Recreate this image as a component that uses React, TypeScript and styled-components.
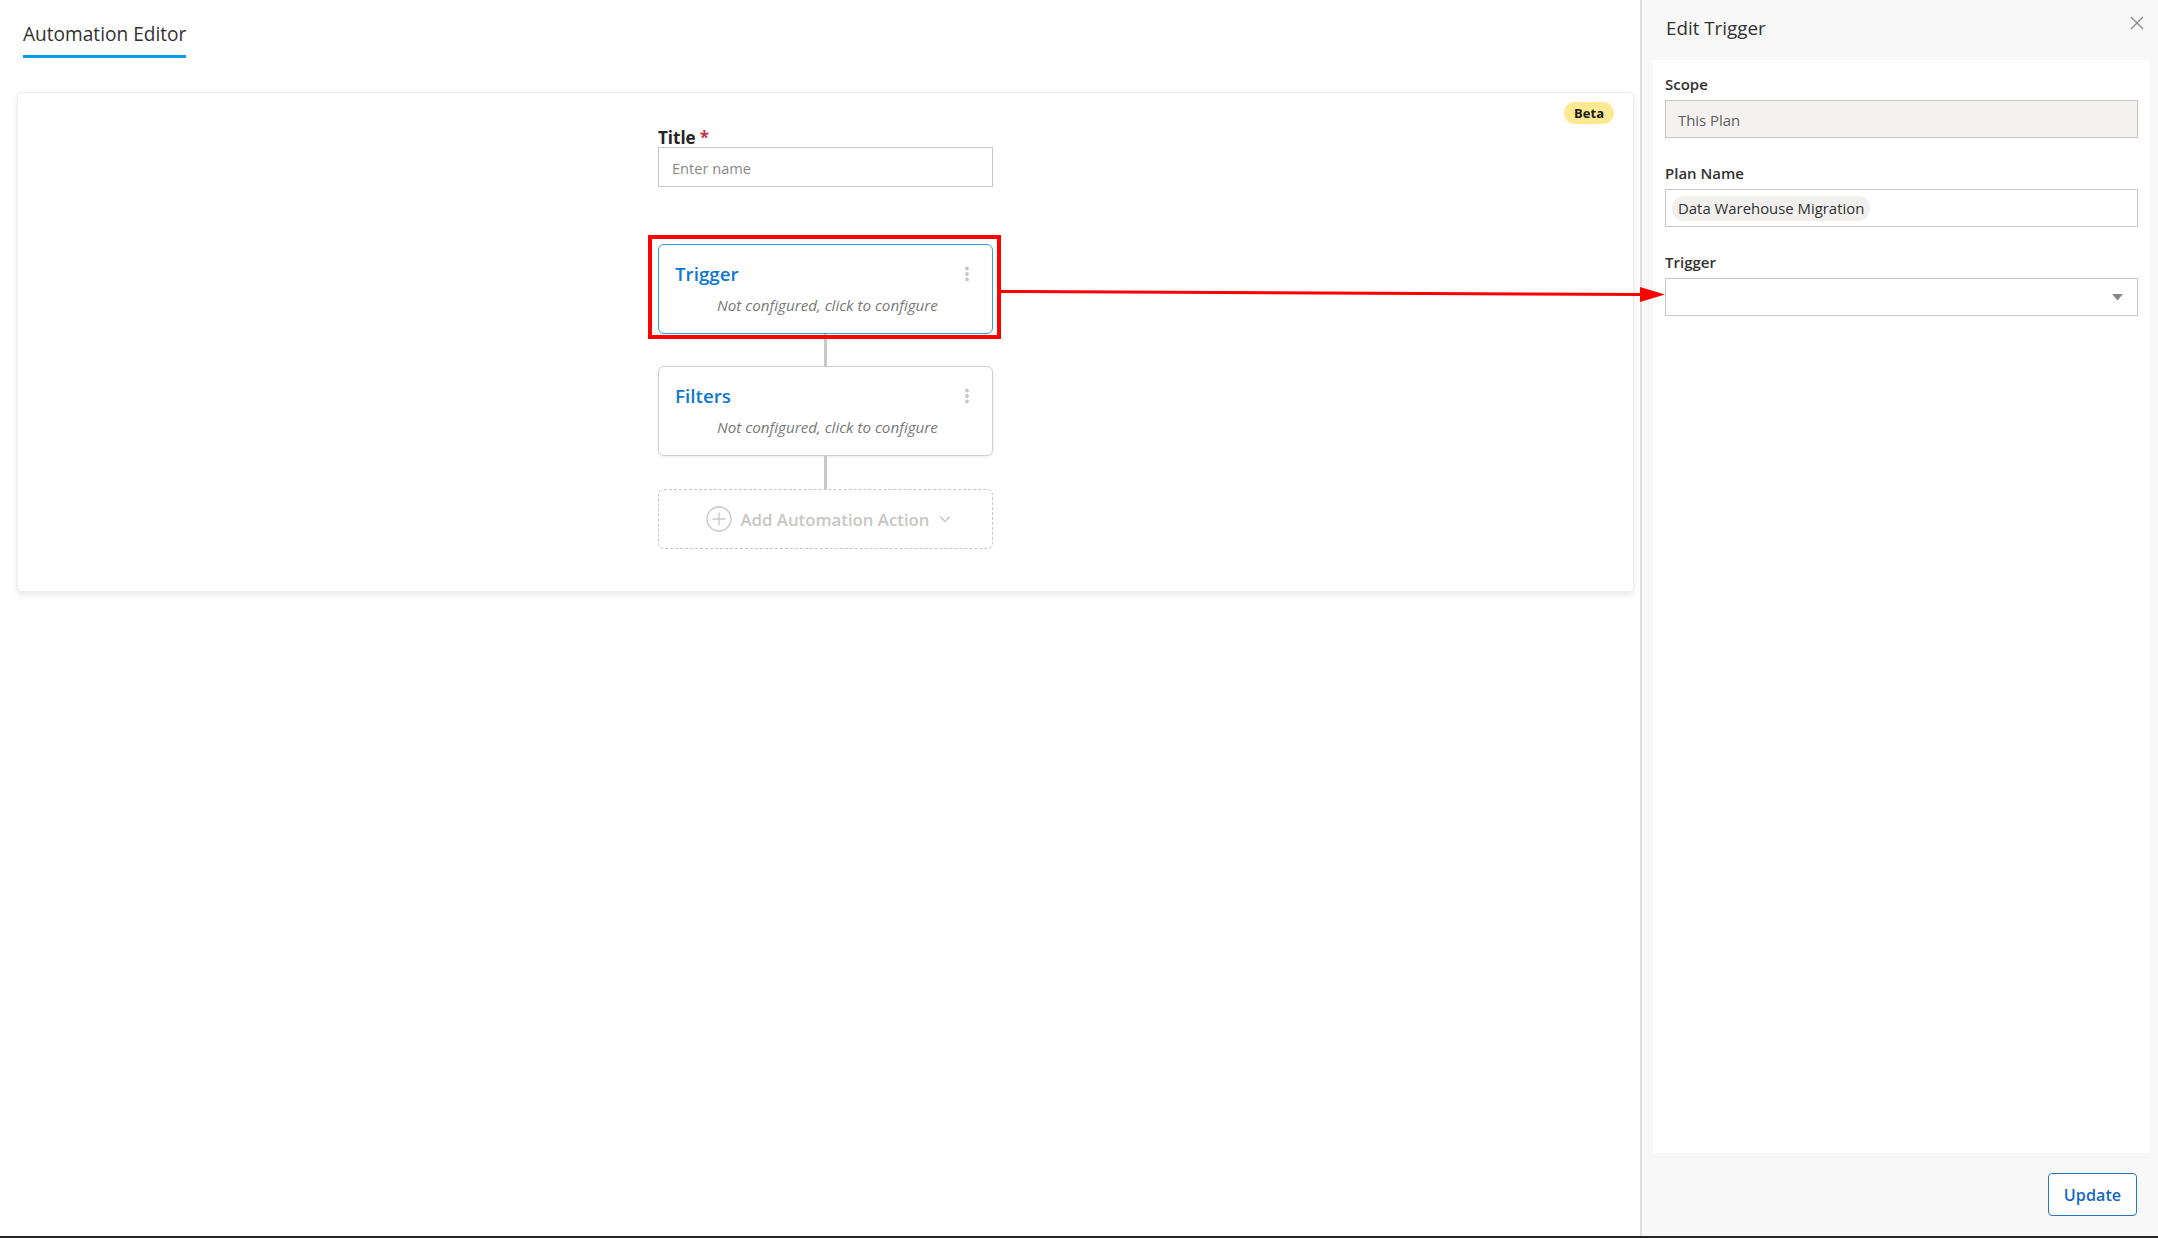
import React from "react";
import styled, { createGlobalStyle } from "styled-components";

const GlobalStyle = createGlobalStyle`
  html, body {
    margin: 0;
    padding: 0;
    height: 100%;
  }
  body {
    font-family: "Open Sans", "Noto Sans", "Liberation Sans", sans-serif;
    color: #323130;
    background: #ffffff;
  }
  #root {
    height: 100%;
  }
  * {
    box-sizing: border-box;
  }
`;

const Page = styled.div`
  position: relative;
  display: flex;
  flex-direction: column;
  width: 100%;
  height: 100vh;
  overflow: hidden;
`;

const Workspace = styled.div`
  flex: 1;
  display: flex;
  min-height: 0;
`;

const EditorPane = styled.main`
  flex: 1;
  display: flex;
  flex-direction: column;
  min-width: 0;
`;

const TabBar = styled.nav`
  height: 92px;
  flex-shrink: 0;
  display: flex;
  align-items: flex-start;
  padding: 21px 0 0 23px;
`;

const Tab = styled.div`
  font-size: 19.1px;
  line-height: 26px;
  color: #323130;
  padding-bottom: 8px;
  border-bottom: 3px solid #0b9ae8;
`;

const Canvas = styled.section`
  position: relative;
  height: 500px;
  margin: 0 6px 0 17px;
  background: #ffffff;
  border: 1px solid #ededed;
  border-radius: 4px;
  box-shadow: 0 3px 6px rgba(0, 0, 0, 0.09);
`;

const BetaBadge = styled.span`
  position: absolute;
  top: 9px;
  right: 19px;
  height: 22px;
  padding: 0 10px;
  border-radius: 11px;
  background: #fde992;
  color: #1b1a19;
  font-size: 13px;
  font-weight: 700;
  line-height: 22px;
`;

const Flow = styled.div`
  width: 335px;
  margin: 0 auto;
  padding-top: 35px;
  display: flex;
  flex-direction: column;
`;

const TitleLabel = styled.label`
  font-size: 17px;
  font-weight: 700;
  line-height: 19px;
  color: #252423;
`;

const Required = styled.span`
  color: #c4314b;
  margin-left: 4px;
`;

const TextInput = styled.input`
  height: 40px;
  width: 100%;
  border: 1px solid #c8c6c4;
  border-radius: 0;
  padding: 1px 13px 0;
  font-family: inherit;
  font-size: 14.6px;
  color: #323130;
  outline: none;
  &::placeholder {
    color: #8a8886;
  }
`;

const Steps = styled.div`
  margin-top: 57px;
  display: flex;
  flex-direction: column;
`;

const StepCard = styled.div<{ $active?: boolean }>`
  height: 90px;
  border: 1px solid ${(p) => (p.$active ? "#2ea1e6" : "#d2d0ce")};
  border-radius: 6px;
  padding: 16px 16px 0 16px;
  background: #ffffff;
  box-shadow: ${(p) => (p.$active ? "none" : "0 1px 3px rgba(0,0,0,0.08)")};
  display: flex;
  flex-direction: column;
  cursor: pointer;
`;

const StepHead = styled.div`
  display: flex;
  align-items: center;
  justify-content: space-between;
`;

const StepTitle = styled.span`
  font-size: 18.8px;
  font-weight: 600;
  line-height: 26px;
  color: #0f78cc;
`;

const StepHint = styled.span`
  margin-top: 8px;
  text-align: center;
  font-size: 15.2px;
  font-style: italic;
  line-height: 20px;
  color: #7a7876;
  padding-left: 4px;
`;

const MoreButton = styled.span`
  width: 20px;
  display: flex;
  justify-content: center;
  margin-right: -1px;
`;

const Connector = styled.div<{ $length: number }>`
  align-self: center;
  width: 3px;
  height: ${(p) => p.$length}px;
  background: #c8c8c8;
`;

const AddAction = styled.div`
  height: 60px;
  border: 1px dashed #c8c6c4;
  border-radius: 6px;
  display: flex;
  align-items: center;
  justify-content: center;
  gap: 9px;
  color: #c8c6c4;
  font-size: 16.8px;
  font-weight: 600;
  padding-left: 6px;
`;

const ChevronWrap = styled.span`
  display: flex;
  margin-left: 1px;
`;

const SidePanel = styled.aside`
  width: 518px;
  flex-shrink: 0;
  border-left: 2px solid #e1dfdd;
  background: #f8f8f8;
  display: flex;
  flex-direction: column;
`;

const PanelHeader = styled.header`
  height: 60px;
  flex-shrink: 0;
  display: flex;
  justify-content: space-between;
  align-items: flex-start;
  padding: 15px 14px 0 24px;
`;

const PanelTitle = styled.h2`
  margin: 0;
  font-size: 18.8px;
  font-weight: 400;
  line-height: 26px;
  color: #323130;
`;

const CloseButton = styled.button`
  border: none;
  background: none;
  padding: 0;
  margin-top: 1px;
  width: 14px;
  height: 14px;
  display: flex;
  cursor: pointer;
`;

const PanelBody = styled.div`
  flex: 1;
  margin: 0 8px 0 11px;
  background: #ffffff;
  padding: 14px 12px;
  display: flex;
  flex-direction: column;
  gap: 25px;
`;

const Field = styled.div`
  display: flex;
  flex-direction: column;
`;

const FieldLabel = styled.label`
  font-size: 15px;
  font-weight: 600;
  line-height: 20px;
  margin-bottom: 6px;
  color: #323130;
`;

const FieldBox = styled.div<{ $disabled?: boolean }>`
  height: 38px;
  border: 1px solid #c8c6c4;
  background: ${(p) => (p.$disabled ? "#f3f2f1" : "#ffffff")};
  color: ${(p) => (p.$disabled ? "#605e5c" : "#323130")};
  font-size: 14.9px;
  display: flex;
  align-items: center;
  padding: 1px ${(p) => (p.$disabled ? "12px" : "6px")} 0;
`;

const Chip = styled.span`
  height: 25px;
  line-height: 25px;
  padding: 0 6px;
  border-radius: 12px;
  background: #f1f0ef;
  color: #323130;
  font-size: 14.9px;
`;

const SelectBox = styled.div`
  height: 38px;
  border: 1px solid #c8c6c4;
  background: #ffffff;
  display: flex;
  align-items: center;
  justify-content: flex-end;
  padding-right: 14px;
`;

const PanelFooter = styled.footer`
  height: 83px;
  flex-shrink: 0;
  display: flex;
  align-items: center;
  justify-content: flex-end;
  padding-right: 21px;
`;

const UpdateButton = styled.button`
  width: 89px;
  height: 43px;
  border: 1px solid #2b73c2;
  border-radius: 4px;
  background: #ffffff;
  color: #1667c2;
  font-family: inherit;
  font-size: 16.2px;
  font-weight: 600;
  cursor: pointer;
`;

const BottomEdge = styled.div`
  height: 2px;
  flex-shrink: 0;
  background: #252525;
`;

const Annotation = styled.svg`
  position: absolute;
  left: 0;
  top: 0;
  pointer-events: none;
`;

function MoreDots() {
  return (
    <svg width="6" height="16" viewBox="0 0 6 16">
      <circle cx="3" cy="2.5" r="1.9" fill="#c8c6c4" />
      <circle cx="3" cy="8" r="1.9" fill="#c8c6c4" />
      <circle cx="3" cy="13.5" r="1.9" fill="#c8c6c4" />
    </svg>
  );
}

function PlusCircle() {
  return (
    <svg width="26" height="26" viewBox="0 0 26 26">
      <circle cx="13" cy="13" r="12" fill="none" stroke="#c8c6c4" strokeWidth="1.3" />
      <path d="M13 6.5v13M6.5 13h13" stroke="#c8c6c4" strokeWidth="1.3" />
    </svg>
  );
}

function ChevronDown() {
  return (
    <svg width="12" height="8" viewBox="0 0 12 8">
      <path d="M1 1.5l5 5 5-5" fill="none" stroke="#c8c6c4" strokeWidth="1.4" />
    </svg>
  );
}

function CloseIcon() {
  return (
    <svg width="14" height="14" viewBox="0 0 14 14">
      <path d="M1 1l12 12M13 1L1 13" stroke="#8a8886" strokeWidth="1.3" />
    </svg>
  );
}

function Caret() {
  return (
    <svg width="11" height="7" viewBox="0 0 11 7">
      <path d="M0 0h11L5.5 6.5z" fill="#8a8886" />
    </svg>
  );
}

type Step = { title: string; active?: boolean; link: number };

const steps: Step[] = [
  { title: "Trigger", active: true, link: 32 },
  { title: "Filters", link: 33 },
];

export default function App() {
  return (
    <Page>
      <GlobalStyle />
      <Workspace>
        <EditorPane>
          <TabBar>
            <Tab>Automation Editor</Tab>
          </TabBar>
          <Canvas>
            <BetaBadge>Beta</BetaBadge>
            <Flow>
              <TitleLabel>
                Title<Required>*</Required>
              </TitleLabel>
              <TextInput placeholder="Enter name" />
              <Steps>
                {steps.map((s) => (
                  <React.Fragment key={s.title}>
                    <StepCard $active={s.active}>
                      <StepHead>
                        <StepTitle>{s.title}</StepTitle>
                        <MoreButton>
                          <MoreDots />
                        </MoreButton>
                      </StepHead>
                      <StepHint>Not configured, click to configure</StepHint>
                    </StepCard>
                    <Connector $length={s.link} />
                  </React.Fragment>
                ))}
                <AddAction>
                  <PlusCircle />
                  <span>Add Automation Action</span>
                  <ChevronWrap>
                    <ChevronDown />
                  </ChevronWrap>
                </AddAction>
              </Steps>
            </Flow>
          </Canvas>
        </EditorPane>
        <SidePanel>
          <PanelHeader>
            <PanelTitle>Edit Trigger</PanelTitle>
            <CloseButton aria-label="Close">
              <CloseIcon />
            </CloseButton>
          </PanelHeader>
          <PanelBody>
            <Field>
              <FieldLabel>Scope</FieldLabel>
              <FieldBox $disabled>This Plan</FieldBox>
            </Field>
            <Field>
              <FieldLabel>Plan Name</FieldLabel>
              <FieldBox>
                <Chip>Data Warehouse Migration</Chip>
              </FieldBox>
            </Field>
            <Field>
              <FieldLabel>Trigger</FieldLabel>
              <SelectBox>
                <Caret />
              </SelectBox>
            </Field>
          </PanelBody>
          <PanelFooter>
            <UpdateButton>Update</UpdateButton>
          </PanelFooter>
        </SidePanel>
      </Workspace>
      <BottomEdge />
      <Annotation width="2158" height="1238" viewBox="0 0 2158 1238">
        <rect x="650" y="237" width="349" height="100" fill="none" stroke="#ff0000" strokeWidth="4" />
        <path d="M1000 291.5L1642 294.5" stroke="#ff0000" strokeWidth="3" />
        <path d="M1640 287L1665 294.5L1640 302z" fill="#ff0000" />
      </Annotation>
    </Page>
  );
}
